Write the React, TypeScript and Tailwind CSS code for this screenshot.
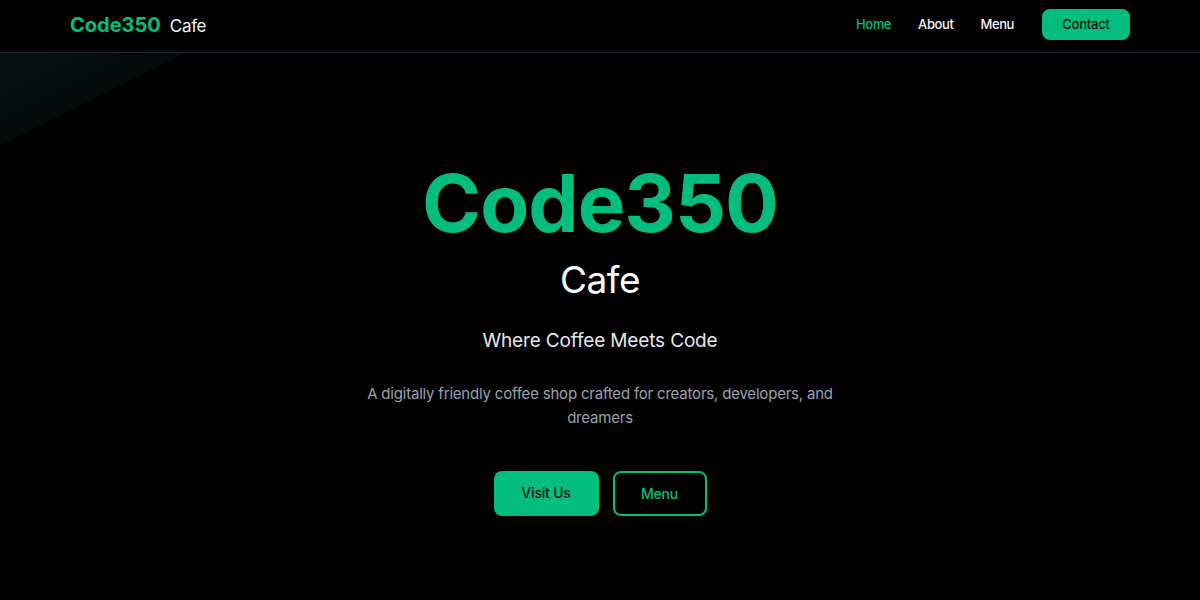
export default function App() {
  const links = ['Home', 'About', 'Menu'];

  return (
    <div className="min-h-screen bg-black font-['Inter',sans-serif] text-white">
      {/* Nav */}
      <header className="border-b border-[#1f2230]">
        <div className="mx-auto flex h-[52px] w-[1060px] items-center justify-between pb-[3px]">
          <a href="#" className="flex items-baseline gap-[9px]">
            <span className="text-[20px] font-bold text-[#02bd7e]">Code350</span>
            <span className="text-[17px] tracking-[-0.3px] text-gray-100">Cafe</span>
          </a>
          <nav className="flex items-center">
            {links.map((link, i) => (
              <a
                key={link}
                href="#"
                className={`mr-[27px] text-[13px] font-medium tracking-[-0.4px] ${i === 0 ? 'text-[#02bd7e]' : 'text-gray-100'}`}
              >
                {link}
              </a>
            ))}
            <a
              href="#"
              className="ml-[1px] flex h-[31px] w-[88px] items-center justify-center rounded-lg bg-[#02bd7e] text-[13px] font-medium tracking-[-0.2px] text-[#0b1410]"
            >
              Contact
            </a>
          </nav>
        </div>
      </header>

      {/* Hero */}
      <section className="relative overflow-hidden">
        <div className="pointer-events-none absolute left-0 top-0 h-[93px] w-[185px] bg-[linear-gradient(to_bottom_right,#051110_0%,#030a09_50%,transparent_50%)]" />

        <div className="relative flex flex-col items-center pt-[110px] text-center">
          <h1 className="text-[80px] font-bold leading-none tracking-[-1px] text-[#02bd7e]">Code350</h1>
          <p className="mt-[18px] text-[37px] leading-none tracking-[-0.5px] text-white">Cafe</p>
          <p className="mt-[29px] text-[19px] tracking-[-0.15px] text-gray-200">Where Coffee Meets Code</p>
          <p className="mt-[26px] max-w-lg text-[15px] leading-6 tracking-[-0.2px] text-gray-400">
            A digitally friendly coffee shop crafted for creators, developers, and dreamers
          </p>
          <div className="mt-[41px] flex items-center gap-[14px]">
            <a
              href="#"
              className="flex h-[45px] w-[105px] items-center justify-center rounded-lg bg-[#02bd7e] pb-[2px] text-[14px] font-medium tracking-[-0.2px] text-[#0b1410]"
            >
              Visit Us
            </a>
            <a
              href="#"
              className="flex h-[45px] w-[94px] items-center justify-center rounded-lg border-2 border-[#02bd7e] text-[14px] font-medium tracking-[-0.2px] text-[#02bd7e]"
            >
              Menu
            </a>
          </div>
        </div>
      </section>
    </div>
  );
}
